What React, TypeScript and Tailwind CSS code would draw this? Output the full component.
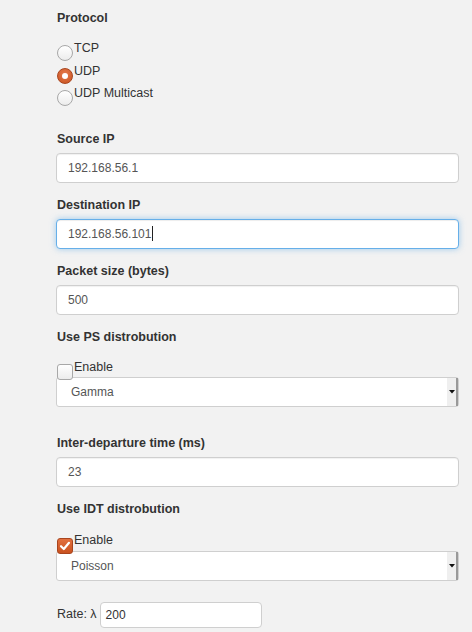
import React from "react";

// Radio / checkbox drawn by hand so they match the orange theme
function Radio({ checked }: { checked?: boolean }) {
  return checked ? (
    <span className="mt-[5px] w-[16px] h-[16px] rounded-full border border-[#a9451e] bg-[radial-gradient(circle_at_50%_35%,#e57a4d,#c9521f)] flex items-center justify-center shrink-0">
      <span className="w-[6px] h-[6px] rounded-full bg-white" />
    </span>
  ) : (
    <span className="mt-[5px] w-[16px] h-[16px] rounded-full border border-[#a8a8a8] bg-[linear-gradient(#ffffff,#ececec)] shrink-0" />
  );
}

function Checkbox({ checked }: { checked?: boolean }) {
  return checked ? (
    <span className="mt-[6px] w-[16px] h-[16px] rounded-[3px] border border-[#a9451e] bg-[linear-gradient(#e2703f,#c9521f)] flex items-center justify-center shrink-0 relative z-10">
      <svg width="12" height="12" viewBox="0 0 12 12">
        <path d="M2 6.2 L4.8 9 L10 2.8" fill="none" stroke="white" strokeWidth="2.2" strokeLinecap="round" strokeLinejoin="round" />
      </svg>
    </span>
  ) : (
    <span className="mt-[5px] w-[16px] h-[16px] rounded-[3px] border border-[#a8a8a8] bg-[linear-gradient(#ffffff,#ececec)] shrink-0 relative z-10" />
  );
}

function Label({ children, className = "" }: { children: React.ReactNode; className?: string }) {
  return <div className={`text-[12.5px] font-bold leading-[17px] text-[#333] ${className}`}>{children}</div>;
}

function TextInput({ value, focused }: { value: string; focused?: boolean }) {
  return (
    <div
      className={`h-[30px] rounded-[4px] bg-white flex items-center pl-[11px] text-[12px] text-[#555] ${
        focused
          ? "border border-[#66afe9] shadow-[inset_0_1px_1px_rgba(0,0,0,0.075),0_0_6px_rgba(102,175,233,0.6)]"
          : "border border-[#cfcfcf] shadow-[inset_0_1px_1px_rgba(0,0,0,0.06)]"
      }`}
    >
      {value}
      {focused && <span className="ml-[1px] w-px h-[15px] bg-[#222]" />}
    </div>
  );
}

function Select({ value }: { value: string }) {
  return (
    <div className="h-[30px] rounded-[3px] border border-[#cfcfcf] bg-white flex items-stretch text-[12px] text-[#555]">
      <div className="flex-1 flex items-center pl-[14px]">{value}</div>
      <div className="w-[11px] bg-[#efefef] border-r-2 border-[#999] flex items-center justify-center">
        <svg width="6" height="4" viewBox="0 0 6 4">
          <path d="M0 0 H6 L3 3.5 Z" fill="#111" />
        </svg>
      </div>
    </div>
  );
}

export default function App() {
  const protocols = [
    { name: "TCP", checked: false },
    { name: "UDP", checked: true },
    { name: "UDP Multicast", checked: false },
  ];

  return (
    <div className="min-h-[632px] bg-[#f2f2f2] pl-[56px] pr-[13px] pt-[10px] font-['Liberation_Sans',Arial,sans-serif] text-[#333]">
      {/* Protocol */}
      <Label className="pl-[1px]">Protocol</Label>
      <div className="mt-[13px]">
        {protocols.map((p) => (
          <div key={p.name} className="h-[22.5px] flex items-start pl-[1px]">
            <Radio checked={p.checked} />
            <span className="text-[12.5px] leading-[17px] ml-[1px]">{p.name}</span>
          </div>
        ))}
      </div>

      {/* IP + packet fields */}
      <Label className="mt-[23px] pl-[1px]">Source IP</Label>
      <div className="mt-[5px]">
        <TextInput value="192.168.56.1" />
      </div>

      <Label className="mt-[14px] pl-[1px]">Destination IP</Label>
      <div className="mt-[5px]">
        <TextInput value="192.168.56.101" focused />
      </div>

      <Label className="mt-[14px] pl-[1px]">Packet size (bytes)</Label>
      <div className="mt-[5px]">
        <TextInput value="500" />
      </div>

      {/* PS distribution */}
      <Label className="mt-[14px] pl-[1px]">Use PS distrobution</Label>
      <div className="mt-[13.5px] h-[18px] flex items-start pl-[1px]">
        <Checkbox />
        <span className="text-[12.5px] leading-[17px] ml-[1px]">Enable</span>
      </div>
      <Select value="Gamma" />

      <Label className="mt-[28px] pl-[1px]">Inter-departure time (ms)</Label>
      <div className="mt-[5px]">
        <TextInput value="23" />
      </div>

      {/* IDT distribution */}
      <Label className="mt-[14px] pl-[1px]">Use IDT distrobution</Label>
      <div className="mt-[13.5px] h-[19px] flex items-start pl-[1px]">
        <Checkbox checked />
        <span className="text-[12.5px] leading-[17px] ml-[1px]">Enable</span>
      </div>
      <Select value="Poisson" />

      <div className="mt-[21px] flex items-center pl-[1px]">
        <span className="text-[12.5px] leading-[17px]">Rate: λ</span>
        <div className="ml-[3px] w-[162px] h-[26px] rounded-[4px] border border-[#cfcfcf] bg-white flex items-center pl-[5px] text-[12px] text-[#333]">
          200
        </div>
      </div>
    </div>
  );
}
